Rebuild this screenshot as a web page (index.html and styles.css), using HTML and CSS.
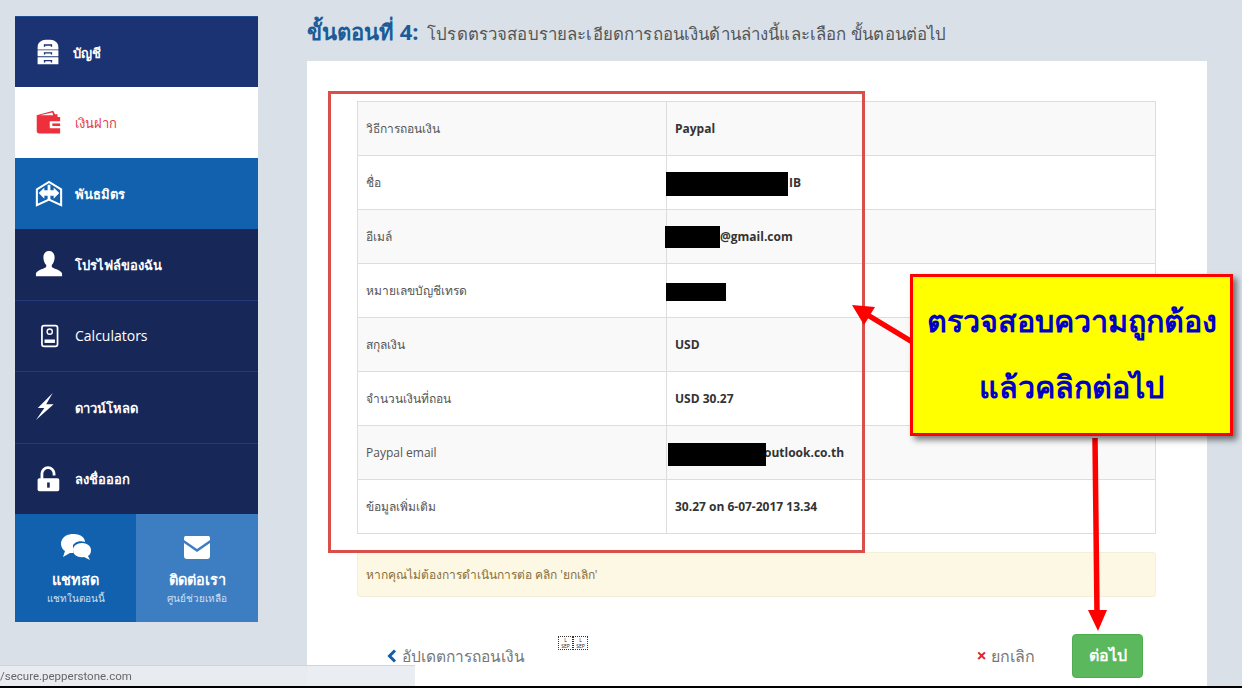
FILE: index.html
```html
<!DOCTYPE html>
<html lang="th">
<head>
    <meta charset="UTF-8">
    <title>ถอนเงิน</title>
    <link rel="stylesheet" href="styles.css">
</head>
<body>
    <div class="page">
        <!-- Menu -->
        <aside class="sidebar">
            <a class="nav-item nav-top">
                <svg class="nav-icon" viewBox="0 0 30 30"><path fill="#fff" d="M3 10C3 3 8 1 15 1s12 2 12 9v2H3zM3 13h24v7H3zM3 21h24v8H3z"/><path fill="none" stroke="#1b3372" stroke-width="1.6" d="M11 9V7h8v2M11 18v-2h8v2M11 27v-2h8v2"/></svg>
                <span class="nav-label nav-label-top">บัญชี</span>
            </a>
            <a class="nav-item nav-active">
                <svg class="nav-icon" viewBox="0 0 30 30"><path fill="#ee2f3c" d="M2 6l19-5 2 4h3v3h3v19H5a3 3 0 0 1-3-3z"/><path fill="#fff" d="M6 6l14-3 1 3z"/><rect x="17" y="13" width="13" height="8" rx="1" fill="#fff"/><rect x="20" y="15.500" width="9" height="3" fill="#ee2f3c"/></svg>
                <span class="nav-label">เงินฝาก</span>
            </a>
            <a class="nav-item nav-partner">
                <svg class="nav-icon nav-icon-lg" viewBox="0 0 30 30"><path fill="none" stroke="#fff" stroke-width="2.200" d="M2 10L15 2l13 8v17l-13-6-13 6z"/><path fill="#fff" d="M13.500 5h3v6H20V8l6 6-6 6v-3h-3.500v4h-3v-4H10v3l-6-6 6-6v3h3.500z"/></svg>
                <span class="nav-label">พันธมิตร</span>
            </a>
            <a class="nav-item nav-dark">
                <svg class="nav-icon nav-icon-lg" viewBox="0 0 30 30"><path fill="#fff" d="M15 1c4 0 6 3 6 7 0 3-1 6-3 8v2c1 2 9 3 11 7v3H1v-3c2-4 10-5 11-7v-2c-2-2-3-5-3-8 0-4 2-7 6-7z"/></svg>
                <span class="nav-label">โปรไฟล์ของฉัน</span>
            </a>
            <a class="nav-item nav-dark">
                <svg class="nav-icon" viewBox="0 0 30 30"><rect x="8" y="3" width="18" height="24" rx="2.500" fill="none" stroke="#fff" stroke-width="2"/><circle cx="17" cy="10" r="3" fill="none" stroke="#fff" stroke-width="1.600"/><rect x="11" y="19" width="12" height="4" fill="#fff"/></svg>
                <span class="nav-label nav-label-en">Calculators</span>
            </a>
            <a class="nav-item nav-dark">
                <svg class="nav-icon nav-icon-lg" viewBox="0 0 30 30"><path fill="#fff" d="M19 0L3 16h7L1 29 20 12h-8z"/></svg>
                <span class="nav-label">ดาวน์โหลด</span>
            </a>
            <a class="nav-item nav-dark nav-last">
                <svg class="nav-icon" viewBox="0 0 30 30"><path fill="none" stroke="#fff" stroke-width="3.200" d="M8 16V9a7 7 0 0 1 14 0v2"/><rect x="3" y="14" width="25" height="15" rx="2" fill="#fff"/><path fill="#172858" d="M14 19h3v6h-3z"/></svg>
                <span class="nav-label">ลงชื่อออก</span>
            </a>
            <div class="side-actions">
                <a class="side-action side-chat">
                    <svg class="side-icon" viewBox="0 0 32 28"><path fill="#fff" d="M13 1C6 1 1 5 1 11c0 3 2 6 4 7l-2 6 7-4h3z"/><path fill="#fff" d="M14 1c7 0 11 4 11 8-5-2-13 0-13 7 0 2 1 3 2 4h-3V1z"/><path fill="#fff" d="M22 10c5 0 9 3 9 7 0 3-1 5-3 6l2 4-6-3c-6 1-11-2-11-7 0-4 4-7 9-7z"/></svg>
                    <strong class="side-title">แชทสด</strong>
                    <span class="side-sub">แชทในตอนนี้</span>
                </a>
                <a class="side-action side-contact">
                    <svg class="side-icon" viewBox="0 0 32 28"><path fill="#fff" d="M4 3h24a3 3 0 0 1 1 2v2L16 16 3 7V5a3 3 0 0 1 1-2zM3 10l13 9 13-9v13a3 3 0 0 1-3 3H6a3 3 0 0 1-3-3z"/></svg>
                    <strong class="side-title">ติดต่อเรา</strong>
                    <span class="side-sub">ศูนย์ช่วยเหลือ</span>
                </a>
            </div>
        </aside>

        <main class="content">
            <h1 class="step-title"><b>ขั้นตอนที่ 4:</b> <span>โปรดตรวจสอบรายละเอียดการถอนเงินด้านล่างนี้และเลือก ขั้นตอนต่อไป</span></h1>
            <section class="card">
                <table class="detail-table">
                    <tr><td>วิธีการถอนเงิน</td><td>Paypal</td></tr>
                    <tr><td>ชื่อ</td><td class="right-name">IB<i class="redact redact-name"></i></td></tr>
                    <tr><td>อีเมล์</td><td class="right-mail">@gmail.com<i class="redact redact-mail"></i></td></tr>
                    <tr><td>หมายเลขบัญชีเทรด</td><td><i class="redact redact-acct"></i></td></tr>
                    <tr><td>สกุลเงิน</td><td>USD</td></tr>
                    <tr><td>จำนวนเงินที่ถอน</td><td>USD 30.27</td></tr>
                    <tr><td>Paypal email</td><td class="right-pay">outlook.co.th<i class="redact redact-pay"></i></td></tr>
                    <tr><td>ข้อมูลเพิ่มเติม</td><td>30.27 on 6-07-2017 13.34</td></tr>
                </table>
                <div class="alert">หากคุณไม่ต้องการดำเนินการต่อ คลิก 'ยกเลิก'</div>
                <div class="actions">
                    <a class="back-link"><svg class="chev" viewBox="0 0 10 14"><path fill="none" stroke="#125ea8" stroke-width="3" d="M8 1.500L2.500 7 8 12.500"/></svg>อัปเดตการถอนเงิน</a>
                    <span class="lsep"><em>L<br>SEP</em><em>L<br>SEP</em></span>
                    <a class="cancel-link"><span class="cross">×</span> ยกเลิก</a>
                    <a class="next-btn">ต่อไป</a>
                </div>
            </section>
        </main>
    </div>

    <!-- Markup drawn over the screenshot -->
    <div class="mark-box"></div>
    <svg class="mark-arrows" viewBox="0 0 1242 688">
        <path fill="none" stroke="#f00" stroke-width="5.500" d="M914 343L866 314M1095 438L1097 612"/>
        <path fill="#f00" d="M852 305L875 307 864 325zM1088 610H1107L1098 631z"/>
    </svg>
    <div class="callout">
        <p>ตรวจสอบความถูกต้อง</p>
        <p>แล้วคลิกต่อไป</p>
    </div>

    <div class="status-url">/secure.pepperstone.com</div>
    <div class="black-edge"></div>
</body>
</html>
```

FILE: styles.css
```css
/* Umum */
html, body {
    height: 100%;
}

body {
    margin: 0;
    background-color: #d9e0e8;
    font-family: "Open Sans", "Noto Sans", "Liberation Sans", sans-serif;
    color: #555;
    overflow: hidden;
}

.page {
    display: flex;
    align-items: flex-start;
    gap: 49px;
    padding: 16px 0 0 15px;
}

/* Menu */
.sidebar {
    width: 243px;
    flex: none;
}

.nav-item {
    display: flex;
    align-items: center;
    height: 71px;
    padding-left: 20px;
    box-sizing: border-box;
    color: #fff;
    font-size: 13px;
    font-weight: 600;
}

.nav-label {
    margin-top: 2px;
}

.nav-label-top {
    margin-left: -2px;
}

.nav-top {
    background-color: #1b3372;
    border-top: 1px solid #1c4f98;
}

.nav-active {
    background-color: #fff;
    color: #e23b48;
    font-weight: 400;
}

.nav-partner {
    background-color: #1261ae;
}

.nav-dark {
    height: 71.5px;
    background-color: #172858;
    border-bottom: 1px solid #22397a;
}

.nav-last {
    height: 70.5px;
    border-bottom: none;
}

.nav-icon {
    width: 26px;
    height: 26px;
    margin-right: 14px;
    flex: none;
}

.nav-icon-lg {
    width: 28px;
    height: 28px;
    margin-right: 12px;
}

.nav-label-en {
    margin-top: 0;
    font-size: 14px;
    font-weight: 400;
}

.side-actions {
    display: grid;
    grid-template-columns: 121px 122px;
    height: 108px;
}

.side-action {
    display: flex;
    flex-direction: column;
    align-items: center;
    padding-top: 19px;
    box-sizing: border-box;
    color: #fff;
}

.side-chat {
    background-color: #1261ae;
}

.side-contact {
    background-color: #3d7dc2;
}

.side-icon {
    width: 32px;
    height: 28px;
}

.side-title {
    margin-top: 7px;
    font-size: 14.500px;
}

.side-sub {
    font-size: 10px;
    color: #cfe0f2;
}

/* Isi */
.content {
    width: 900px;
    flex: none;
}

.step-title {
    height: 45px;
    margin: 0;
    box-sizing: border-box;
    font-size: 16.800px;
    font-weight: 400;
    line-height: 30px;
    letter-spacing: 0.15px;
    color: #555;
    white-space: nowrap;
}

.step-title b {
    font-size: 22px;
    color: #1b5b97;
    margin-right: 4px;
    letter-spacing: 0;
}

.card {
    background-color: #fff;
    padding: 40px 51px 0 50px;
    height: 627px;
    box-sizing: border-box;
}

.detail-table {
    width: 100%;
    border-collapse: collapse;
    font-size: 12px;
    table-layout: fixed;
}

.detail-table td {
    height: 53px;
    padding: 0 8px;
    border: 1px solid #ddd;
    position: relative;
}

.detail-table td:first-child {
    width: 292px;
}

.detail-table td:last-child {
    font-weight: 700;
    color: #333;
}

.detail-table tr:nth-child(odd) td {
    background-color: #f9f9f9;
}

/* Kotak hitam */
.redact {
    position: absolute;
    background-color: #000;
    left: -1px;
}

.redact-name {
    top: 16px;
    width: 122px;
    height: 24px;
}

.redact-mail {
    top: 16px;
    left: -2px;
    width: 55px;
    height: 22px;
}

.redact-acct {
    top: 19px;
    width: 60px;
    height: 18px;
}

.redact-pay {
    top: 17px;
    left: 1px;
    width: 98px;
    height: 23px;
}

.right-name {
    padding-left: 122px !important;
}

.right-mail {
    padding-left: 53px !important;
}

.right-pay {
    padding-left: 97px !important;
}

.alert {
    margin-top: 18px;
    height: 45px;
    padding: 0 8px;
    line-height: 44px;
    box-sizing: border-box;
    font-size: 12px;
    color: #8a6d3b;
    background-color: #fcf8e3;
    border: 1px solid #f5efd8;
    border-radius: 3px;
}

.actions {
    display: flex;
    align-items: center;
    margin-top: 37px;
    height: 44px;
    padding: 0 13px 0 30px;
    font-size: 15.500px;
    color: #777;
}

.back-link {
    display: flex;
    align-items: center;
}

.chev {
    width: 10px;
    height: 14px;
    margin-right: 5px;
}

.lsep {
    display: flex;
    margin: -26px auto 0 33px;
}

.lsep em {
    display: block;
    width: 13px;
    border: 1px dotted #333;
    font-size: 5px;
    line-height: 6px;
    font-style: normal;
    text-align: center;
    color: #222;
}

.cancel-link {
    margin-right: 37px;
    font-size: 16px;
}

.cross {
    color: #e0262c;
    font-weight: 700;
    font-size: 18px;
    line-height: 1;
}

.next-btn {
    display: block;
    width: 71px;
    height: 44px;
    line-height: 40px;
    text-align: center;
    color: #fff;
    font-weight: 700;
    font-size: 16px;
    background-color: #5cb85c;
    border: 1px solid #4cae4c;
    box-sizing: border-box;
    border-radius: 4px;
}

/* Coretan di atas gambar */
.mark-box {
    position: absolute;
    left: 328px;
    top: 91px;
    width: 537px;
    height: 462px;
    box-sizing: border-box;
    border: 3px solid #d9504a;
}

.mark-arrows {
    position: absolute;
    left: 0;
    top: 0;
    width: 1242px;
    height: 688px;
}

.callout {
    position: absolute;
    left: 910px;
    top: 274px;
    width: 323px;
    height: 162px;
    box-sizing: border-box;
    border: 3px solid #f00;
    background-color: #ff0;
    box-shadow: 4px 4px 6px rgba(0, 0, 0, 0.5);
    color: #0000c8;
    font-family: "Liberation Serif", "Noto Sans", serif;
    font-size: 30.500px;
    font-weight: 700;
    text-align: center;
}

.callout p {
    margin: 0;
    height: 66px;
    line-height: 66px;
    white-space: nowrap;
}

.callout p:first-child {
    margin-top: 12px;
}

.status-url {
    position: fixed;
    left: 0;
    bottom: 2px;
    width: 415px;
    height: 21px;
    line-height: 21px;
    box-sizing: border-box;
    background-color: rgba(233, 236, 241, 0.95);
    border-top: 1px solid #d0d3d8;
    font-family: Roboto, sans-serif;
    font-size: 11.500px;
    color: #666;
}

.black-edge {
    position: fixed;
    left: 0;
    right: 0;
    bottom: 0;
    height: 2px;
    background-color: #000;
}
```
